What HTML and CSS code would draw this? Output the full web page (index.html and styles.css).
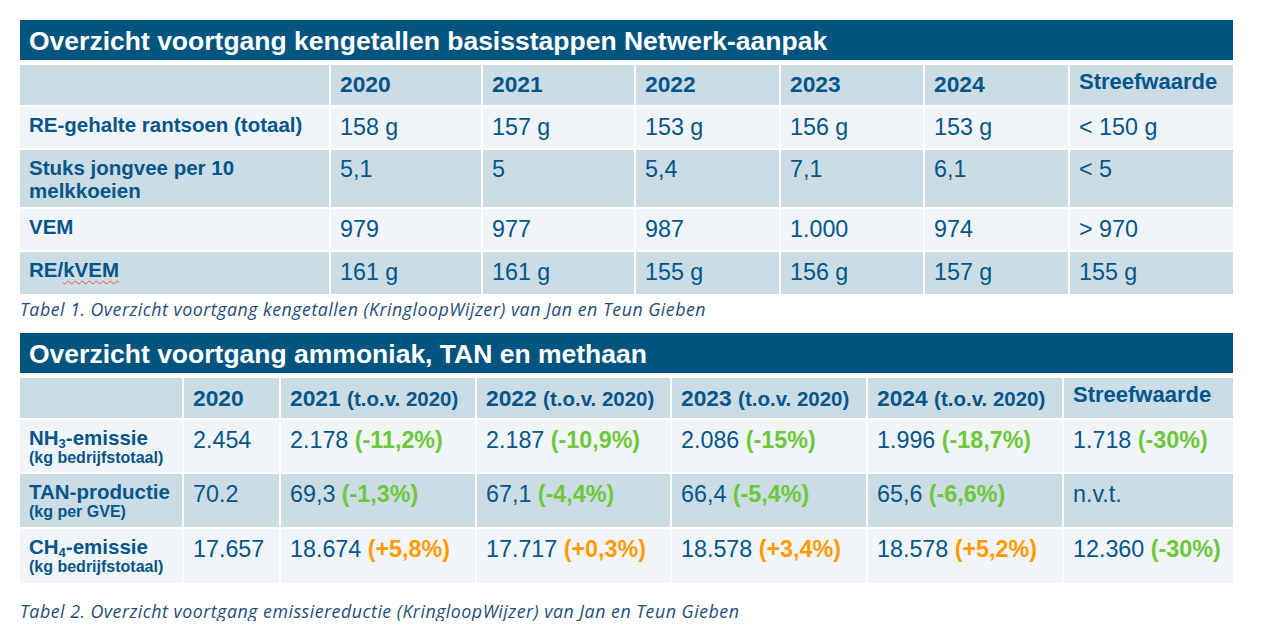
FILE: index.html
```html
<!DOCTYPE html>
<html lang="nl">
<head>
<meta charset="utf-8">
<title>Overzicht voortgang</title>
<link rel="stylesheet" href="styles.css">
</head>
<body>
<main class="page">
  <section class="block block-1">
    <h2 class="table-title">Overzicht voortgang kengetallen basisstappen Netwerk-aanpak</h2>
    <div class="grid grid-1">
      <div class="row head">
        <div class="cell"></div>
        <div class="cell year">2020</div>
        <div class="cell year">2021</div>
        <div class="cell year">2022</div>
        <div class="cell year">2023</div>
        <div class="cell year">2024</div>
        <div class="cell target-head">Streefwaarde</div>
      </div>
      <div class="row light">
        <div class="cell label">RE-gehalte rantsoen (totaal)</div>
        <div class="cell val">158 g</div>
        <div class="cell val">157 g</div>
        <div class="cell val">153 g</div>
        <div class="cell val">156 g</div>
        <div class="cell val">153 g</div>
        <div class="cell val">&lt; 150 g</div>
      </div>
      <div class="row dark">
        <div class="cell label">Stuks jongvee per 10 melkkoeien</div>
        <div class="cell val val-tight">5,1</div>
        <div class="cell val val-tight">5</div>
        <div class="cell val val-tight">5,4</div>
        <div class="cell val val-tight">7,1</div>
        <div class="cell val val-tight">6,1</div>
        <div class="cell val val-tight">&lt; 5</div>
      </div>
      <div class="row light">
        <div class="cell label">VEM</div>
        <div class="cell val">979</div>
        <div class="cell val">977</div>
        <div class="cell val">987</div>
        <div class="cell val">1.000</div>
        <div class="cell val">974</div>
        <div class="cell val">&gt; 970</div>
      </div>
      <div class="row dark">
        <div class="cell label">RE/<span class="spell">kVEM</span></div>
        <div class="cell val">161 g</div>
        <div class="cell val">161 g</div>
        <div class="cell val">155 g</div>
        <div class="cell val">156 g</div>
        <div class="cell val">157 g</div>
        <div class="cell val">155 g</div>
      </div>
    </div>
    <p class="caption caption-1">Tabel 1. Overzicht voortgang kengetallen (KringloopWijzer) van Jan en Teun Gieben</p>
  </section>

  <section class="block block-2">
    <h2 class="table-title">Overzicht voortgang ammoniak, TAN en methaan</h2>
    <div class="grid grid-2">
      <div class="row head">
        <div class="cell"></div>
        <div class="cell year">2020</div>
        <div class="cell year">2021 <span class="rel">(t.o.v. 2020)</span></div>
        <div class="cell year">2022 <span class="rel">(t.o.v. 2020)</span></div>
        <div class="cell year">2023 <span class="rel">(t.o.v. 2020)</span></div>
        <div class="cell year">2024 <span class="rel">(t.o.v. 2020)</span></div>
        <div class="cell target-head">Streefwaarde</div>
      </div>
      <div class="row light">
        <div class="cell label">NH<sub>3</sub>-emissie<span class="unit">(kg bedrijfstotaal)</span></div>
        <div class="cell val">2.454</div>
        <div class="cell val">2.178 <b class="down">(-11,2%)</b></div>
        <div class="cell val">2.187 <b class="down">(-10,9%)</b></div>
        <div class="cell val">2.086 <b class="down">(-15%)</b></div>
        <div class="cell val">1.996 <b class="down">(-18,7%)</b></div>
        <div class="cell val">1.718 <b class="down">(-30%)</b></div>
      </div>
      <div class="row dark">
        <div class="cell label">TAN-productie<span class="unit">(kg per GVE)</span></div>
        <div class="cell val">70.2</div>
        <div class="cell val">69,3 <b class="down">(-1,3%)</b></div>
        <div class="cell val">67,1 <b class="down">(-4,4%)</b></div>
        <div class="cell val">66,4 <b class="down">(-5,4%)</b></div>
        <div class="cell val">65,6 <b class="down">(-6,6%)</b></div>
        <div class="cell val">n.v.t.</div>
      </div>
      <div class="row light">
        <div class="cell label">CH<sub>4</sub>-emissie<span class="unit">(kg bedrijfstotaal)</span></div>
        <div class="cell val">17.657</div>
        <div class="cell val">18.674 <b class="up">(+5,8%)</b></div>
        <div class="cell val">17.717 <b class="up">(+0,3%)</b></div>
        <div class="cell val">18.578 <b class="up">(+3,4%)</b></div>
        <div class="cell val">18.578 <b class="up">(+5,2%)</b></div>
        <div class="cell val">12.360 <b class="down">(-30%)</b></div>
      </div>
    </div>
    <p class="caption caption-2">Tabel 2. Overzicht voortgang emissiereductie (KringloopWijzer) van Jan en Teun Gieben</p>
  </section>
</main>
</body>
</html>
```

FILE: styles.css
```css
* {
  box-sizing: border-box;
}

html, body {
  margin: 0;
  padding: 0;
  background: #ffffff;
}

body {
  font-family: "Liberation Sans", Arial, sans-serif;
  color: #04568a;
}

.page {
  width: 1213px;
  margin: 20px 0 0 20px;
}

.table-title {
  margin: 0 0 5px;
  height: 40px;
  padding: 3px 9px 0;
  line-height: 37px;
  font-size: 26.5px;
  font-weight: bold;
  color: #ffffff;
  background: #03557f;
  white-space: nowrap;
}

.grid {
  display: grid;
  gap: 2px;
  background: #ffffff;
}

.grid-1 {
  grid-template-columns: 309px 150px 151px 143px 142px 143px 163px;
  grid-template-rows: 40px 41px 57px 41px 42px;
}

.grid-2 {
  grid-template-columns: 162px 95px 194px 193px 194px 194px 169px;
  grid-template-rows: 40px 52px 53px 54px;
}

.row {
  display: contents;
}

.row.head > .cell,
.row.dark > .cell {
  background: #cbdce5;
}

.row.light > .cell {
  background: #f1f5f8;
}

.cell {
  padding: 7px 9px 0;
  white-space: nowrap;
}

.year {
  padding-top: 6px;
  font-size: 22.8px;
  line-height: 26px;
  font-weight: bold;
}

.grid-2 .year {
  padding-top: 7px;
}

.rel {
  font-size: 20.5px;
}

.target-head {
  padding-top: 4px;
  font-size: 22px;
  line-height: 26px;
  font-weight: bold;
}

.label {
  padding-top: 6px;
  padding-right: 2px;
  font-size: 20.5px;
  line-height: 23px;
  font-weight: bold;
  white-space: normal;
}

.label sub {
  font-size: 13px;
  line-height: 0;
  vertical-align: -3px;
}

.unit {
  display: block;
  font-size: 16px;
  line-height: 17px;
}

.spell {
  text-decoration: underline wavy #e0504a;
  text-decoration-thickness: 1px;
  text-underline-offset: 3px;
}

.val {
  font-size: 23.3px;
  line-height: 26px;
}

.val-tight {
  padding-top: 6px;
}

.down {
  color: #6cc83a;
}

.up {
  color: #ff9a00;
}

.caption {
  margin: 0;
  font-family: "Open Sans", Lato, sans-serif;
  font-style: italic;
  font-size: 17.8px;
  letter-spacing: 0.5px;
  line-height: 20px;
  color: #1f4e79;
  white-space: nowrap;
}

.caption-1 {
  height: 39px;
  padding-top: 5px;
}

.caption-2 {
  padding-top: 18px;
}
```
